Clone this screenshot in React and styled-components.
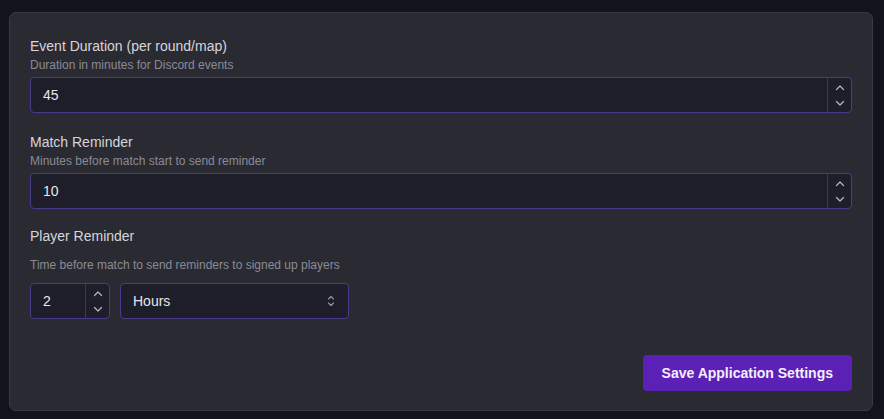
import React from "react";
import styled, { createGlobalStyle } from "styled-components";

const Global = createGlobalStyle`
  html, body { margin: 0; padding: 0; background: #13131b; }
  body { font-family: "Liberation Sans", Arial, sans-serif; }
  * { box-sizing: border-box; }
`;

const Page = styled.div`
  width: 884px;
  height: 419px;
  padding: 12px 11px 8px 9px;
  background: #13131b;
`;

const Card = styled.div`
  height: 100%;
  background: #2a2a32;
  border: 1px solid #3a3a44;
  border-radius: 7px;
  padding: 23px 20px 19px 20px;
  display: flex;
  flex-direction: column;
`;

const Field = styled.div`
  display: flex;
  flex-direction: column;
  margin-bottom: ${(p) => p.$mb || 0}px;
`;

const Label = styled.div`
  font-size: 14px;
  line-height: 20px;
  color: #d6d6dc;
  margin-bottom: ${(p) => p.$mb ?? 1}px;
`;

const Desc = styled.div`
  font-size: 12px;
  line-height: 16px;
  color: #8b8b95;
  margin-bottom: ${(p) => p.$mb ?? 4}px;
`;

const InputBox = styled.div`
  display: flex;
  align-items: stretch;
  height: 36px;
  width: ${(p) => p.$w || "100%"};
  background: #1e1d2a;
  border: 1px solid #4b3a8c;
  border-radius: 4px;
`;

const Value = styled.div`
  flex: 1;
  display: flex;
  align-items: center;
  padding-left: 12px;
  font-size: 14px;
  color: #e6e6ea;
`;

const Spin = styled.div`
  width: 24px;
  border-left: 1px solid #3c3a4c;
  display: flex;
  flex-direction: column;
  align-items: center;
  justify-content: space-between;
  padding: 5px 0 4px;
`;

const Row = styled.div`
  display: flex;
  gap: 10px;
`;

const SelectBox = styled.div`
  width: 229px;
  height: 36px;
  background: #1e1d2a;
  border: 1px solid #4b3a8c;
  border-radius: 4px;
  display: flex;
  align-items: center;
  justify-content: space-between;
  padding: 0 12px;
  font-size: 14px;
  color: #e6e6ea;
`;

const Footer = styled.div`
  margin-top: auto;
  display: flex;
  justify-content: flex-end;
`;

const Button = styled.button`
  height: 36px;
  padding: 0 19px;
  background: #5b21b6;
  color: #f3f0fa;
  border: none;
  border-radius: 4px;
  font-family: "Liberation Sans", Arial, sans-serif;
  font-weight: 700;
  font-size: 14px;
`;

const Chevron = ({ up }) => (
  <svg width="10" height="10" viewBox="0 0 10 10" fill="none">
    <path
      d={up ? "M1.5 6.5 L5 3 L8.5 6.5" : "M1.5 3.5 L5 7 L8.5 3.5"}
      stroke="#b8b8c4"
      strokeWidth="1.2"
      strokeLinecap="round"
      strokeLinejoin="round"
    />
  </svg>
);

const UpDown = () => (
  <svg width="10" height="14" viewBox="0 0 10 14" fill="none">
    <path
      d="M2.5 5 L5 2.5 L7.5 5 M2.5 9 L5 11.5 L7.5 9"
      stroke="#9a9aa6"
      strokeWidth="1.1"
      strokeLinecap="round"
      strokeLinejoin="round"
    />
  </svg>
);

const NumberInput = ({ value, width }) => (
  <InputBox $w={width}>
    <Value>{value}</Value>
    <Spin>
      <Chevron up />
      <Chevron />
    </Spin>
  </InputBox>
);

export default function App() {
  return (
    <>
      <Global />
      <Page>
        <Card>
          <Field $mb={19}>
            <Label>Event Duration (per round/map)</Label>
            <Desc>Duration in minutes for Discord events</Desc>
            <NumberInput value="45" />
          </Field>
          <Field $mb={17}>
            <Label>Match Reminder</Label>
            <Desc>Minutes before match start to send reminder</Desc>
            <NumberInput value="10" />
          </Field>
          <Field>
            <Label $mb={11}>Player Reminder</Label>
            <Desc $mb={10}>Time before match to send reminders to signed up players</Desc>
            <Row>
              <NumberInput value="2" width="80px" />
              <SelectBox>
                <span>Hours</span>
                <UpDown />
              </SelectBox>
            </Row>
          </Field>
          <Footer>
            <Button>Save Application Settings</Button>
          </Footer>
        </Card>
      </Page>
    </>
  );
}
